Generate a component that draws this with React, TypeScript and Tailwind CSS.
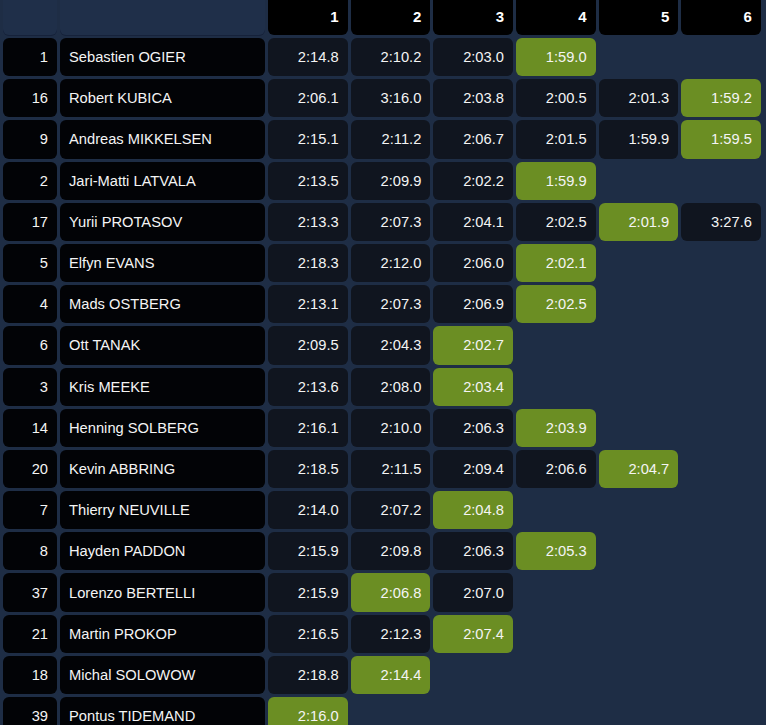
import React from "react";

type Row = { no: number; name: string; times: (string | null)[]; best: number };

const rows: Row[] = [
  { no: 1, name: "Sebastien OGIER", times: ["2:14.8", "2:10.2", "2:03.0", "1:59.0", null, null], best: 3 },
  { no: 16, name: "Robert KUBICA", times: ["2:06.1", "3:16.0", "2:03.8", "2:00.5", "2:01.3", "1:59.2"], best: 5 },
  { no: 9, name: "Andreas MIKKELSEN", times: ["2:15.1", "2:11.2", "2:06.7", "2:01.5", "1:59.9", "1:59.5"], best: 5 },
  { no: 2, name: "Jari-Matti LATVALA", times: ["2:13.5", "2:09.9", "2:02.2", "1:59.9", null, null], best: 3 },
  { no: 17, name: "Yurii PROTASOV", times: ["2:13.3", "2:07.3", "2:04.1", "2:02.5", "2:01.9", "3:27.6"], best: 4 },
  { no: 5, name: "Elfyn EVANS", times: ["2:18.3", "2:12.0", "2:06.0", "2:02.1", null, null], best: 3 },
  { no: 4, name: "Mads OSTBERG", times: ["2:13.1", "2:07.3", "2:06.9", "2:02.5", null, null], best: 3 },
  { no: 6, name: "Ott TANAK", times: ["2:09.5", "2:04.3", "2:02.7", null, null, null], best: 2 },
  { no: 3, name: "Kris MEEKE", times: ["2:13.6", "2:08.0", "2:03.4", null, null, null], best: 2 },
  { no: 14, name: "Henning SOLBERG", times: ["2:16.1", "2:10.0", "2:06.3", "2:03.9", null, null], best: 3 },
  { no: 20, name: "Kevin ABBRING", times: ["2:18.5", "2:11.5", "2:09.4", "2:06.6", "2:04.7", null], best: 4 },
  { no: 7, name: "Thierry NEUVILLE", times: ["2:14.0", "2:07.2", "2:04.8", null, null, null], best: 2 },
  { no: 8, name: "Hayden PADDON", times: ["2:15.9", "2:09.8", "2:06.3", "2:05.3", null, null], best: 3 },
  { no: 37, name: "Lorenzo BERTELLI", times: ["2:15.9", "2:06.8", "2:07.0", null, null, null], best: 1 },
  { no: 21, name: "Martin PROKOP", times: ["2:16.5", "2:12.3", "2:07.4", null, null, null], best: 2 },
  { no: 18, name: "Michal SOLOWOW", times: ["2:18.8", "2:14.4", null, null, null, null], best: 1 },
  { no: 39, name: "Pontus TIDEMAND", times: ["2:16.0", null, null, null, null, null], best: 0 },
];

export default function App() {
  return (
    <div
      className="w-[766px] h-[725px] overflow-hidden bg-[#1e2d45] text-[#f4f4f4]"
      style={{ fontFamily: '"Liberation Sans", Arial, sans-serif' }}
    >
      <div className="grid grid-cols-[54px_205px_repeat(6,79.67px)] auto-rows-[38.2px] grid-rows-[35px] gap-[3px] pl-[3px]">
        <div className="rounded-b-[6px] bg-[#1f2f49] shadow-[0_1px_0_#16223a]" />
        <div className="rounded-b-[6px] bg-[#1f2f49] shadow-[0_1px_0_#16223a]" />
        {[1, 2, 3, 4, 5, 6].map((n) => (
          <div
            key={n}
            className="rounded-b-[6px] bg-black flex items-center justify-end pr-[9px] text-[15px] font-bold text-white"
          >
            {n}
          </div>
        ))}
        {rows.map((r) => (
          <React.Fragment key={r.no}>
            <div className="rounded-[6px] bg-[#020306] flex items-center justify-end pr-[9px] text-[14.7px]">
              {r.no}
            </div>
            <div className="rounded-[6px] bg-[#020306] flex items-center pl-[9px] text-[14.7px]">
              {r.name}
            </div>
            {r.times.map((t, i) =>
              t === null ? (
                <div key={i} />
              ) : (
                <div
                  key={i}
                  className={
                    i === r.best
                      ? "rounded-[6px] bg-[#6b8e23] flex items-center justify-end pr-[9px] text-[14.7px]"
                      : "rounded-[6px] bg-[#10151f] flex items-center justify-end pr-[9px] text-[14.7px]"
                  }
                >
                  {t}
                </div>
              )
            )}
          </React.Fragment>
        ))}
      </div>
    </div>
  );
}
